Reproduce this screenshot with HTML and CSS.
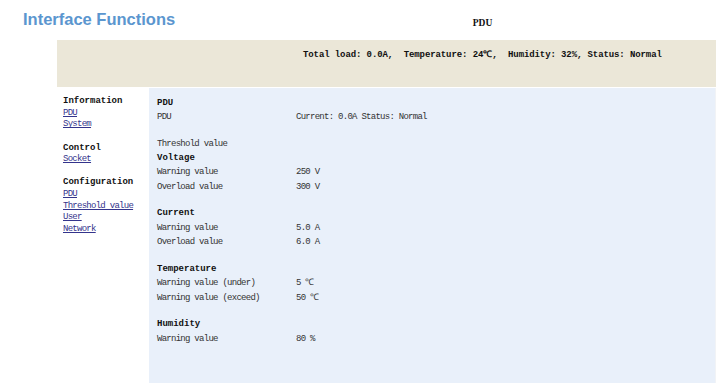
FILE: index.html
```html
<!DOCTYPE html>
<html>
<head>
<meta charset="utf-8">
<title>Interface Functions</title>
<link rel="stylesheet" href="styles.css">
</head>
<body>
<header class="top">
  <h1 class="title">Interface Functions</h1>
  <div class="device">PDU</div>
</header>
<div class="status-bar">
  <p class="status">Total load: 0.0A,&nbsp; Temperature: 24℃,&nbsp; Humidity: 32%, Status: Normal</p>
</div>
<div class="layout">
  <nav class="side">
    <div class="group">
      <div class="group-title">Information</div>
      <a class="link" href="#">PDU</a>
      <a class="link" href="#">System</a>
    </div>
    <div class="group">
      <div class="group-title">Control</div>
      <a class="link" href="#">Socket</a>
    </div>
    <div class="group">
      <div class="group-title">Configuration</div>
      <a class="link" href="#">PDU</a>
      <a class="link" href="#">Threshold value</a>
      <a class="link" href="#">User</a>
      <a class="link" href="#">Network</a>
    </div>
  </nav>
  <main class="panel">
    <div class="row head"><span>PDU</span></div>
    <div class="row"><span>PDU</span><span>Current: 0.0A Status: Normal</span></div>
    <div class="gap"></div>
    <div class="row"><span>Threshold value</span></div>
    <div class="row head"><span>Voltage</span></div>
    <div class="row"><span>Warning value</span><span>250 V</span></div>
    <div class="row"><span>Overload value</span><span>300 V</span></div>
    <div class="gap"></div>
    <div class="row head"><span>Current</span></div>
    <div class="row"><span>Warning value</span><span>5.0 A</span></div>
    <div class="row"><span>Overload value</span><span>6.0 A</span></div>
    <div class="gap"></div>
    <div class="row head"><span>Temperature</span></div>
    <div class="row"><span>Warning value (under)</span><span>5 ℃</span></div>
    <div class="row"><span>Warning value (exceed)</span><span>50 ℃</span></div>
    <div class="gap"></div>
    <div class="row head"><span>Humidity</span></div>
    <div class="row"><span>Warning value</span><span>80 %</span></div>
  </main>
</div>
</body>
</html>
```
FILE: styles.css
```css
html, body {
  margin: 0;
  padding: 0;
  background: #ffffff;
  height: 100%;
}
body {
  font-family: "Liberation Mono", "DejaVu Sans Mono", monospace;
  font-size: 9px;
  letter-spacing: -0.73px;
  color: #333333;
  overflow: hidden;
}
.top {
  display: grid;
  grid-template-columns: 245px 475px;
  height: 40px;
}
.title {
  margin: 0;
  padding: 9px 0 0 23px;
  font-family: "Liberation Sans", Arial, sans-serif;
  font-size: 16.5px;
  line-height: 20px;
  letter-spacing: 0;
  font-weight: bold;
  color: #5b96cf;
  white-space: nowrap;
}
.device {
  padding-top: 17px;
  text-align: center;
  font-family: "Liberation Serif", "Times New Roman", serif;
  font-weight: bold;
  font-size: 9.5px;
  line-height: 12px;
  letter-spacing: 0;
  color: #111111;
}
.status-bar {
  margin: 0 4px 0 57px;
  height: 47px;
  background: #ebe7d8;
}
.status {
  margin: 0;
  padding: 9px 0 0 246px;
  font-weight: bold;
  letter-spacing: -0.1px;
  line-height: 12px;
  color: #111111;
  white-space: nowrap;
}
.layout {
  display: flex;
  margin: 1px 4px 0 57px;
  height: calc(100% - 88px);
}
.side {
  width: 86px;
  padding: 8.2px 0 0 6px;
  flex: none;
  line-height: 11.6px;
}
.group {
  margin-bottom: 11.6px;
}
.group-title {
  font-weight: bold;
  letter-spacing: 0;
  color: #111111;
}
.link {
  display: block;
  color: #34348c;
  text-decoration: underline;
  white-space: nowrap;
}
.panel {
  flex: 1;
  background: #e9f0fa;
  padding: 7.5px 0 0 8px;
  border-right: 1px solid #f1f3f6;
}
.row {
  display: grid;
  grid-template-columns: 139px auto;
  height: 14.4px;
  line-height: 14.4px;
  white-space: nowrap;
}
.head {
  font-weight: bold;
  letter-spacing: 0;
  color: #111111;
}
.gap {
  height: 12.3px;
}
```
